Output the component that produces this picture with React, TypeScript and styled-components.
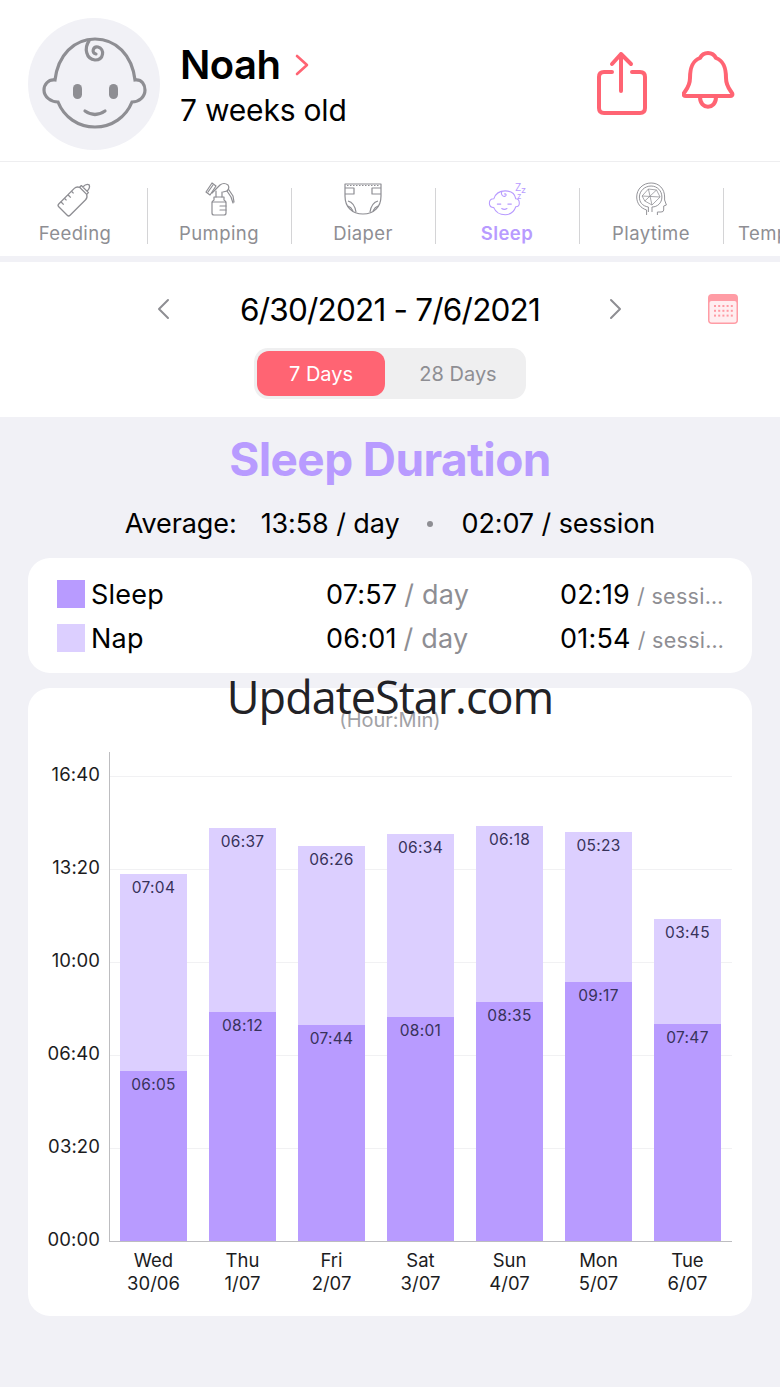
import React from "react";
import styled, { createGlobalStyle } from "styled-components";

const PINK = "#ff6473";
const SLEEP = "#b89bff";
const NAP = "#dccfff";
const MIN_PX = 0.465;

const GlobalStyle = createGlobalStyle`
  html, body {
    margin: 0;
    padding: 0;
    background: #f1f1f6;
  }
  body {
    font-family: Inter, "Liberation Sans", sans-serif;
    color: #000;
  }
`;

const Page = styled.div`
  width: 780px;
  height: 1387px;
  overflow: hidden;
  background: #f1f1f6;
`;

const Header = styled.header`
  height: 162px;
  box-sizing: border-box;
  padding: 18px 44px 0 28px;
  display: flex;
  align-items: flex-start;
  background: #fff;
  border-bottom: 1px solid #eeeef0;
`;

const Avatar = styled.div`
  width: 132px;
  height: 132px;
  border-radius: 50%;
  background: #f1f1f6;
  flex: none;
`;

const Who = styled.div`
  margin: 23px 0 0 20px;
  flex: 1;
`;

const Name = styled.div`
  display: flex;
  align-items: center;
  gap: 14px;
  font-size: 40px;
  line-height: 48px;
  font-weight: 600;
  letter-spacing: -0.5px;
`;

const Age = styled.div`
  font-size: 30px;
  line-height: 38px;
  margin-top: 2px;
  letter-spacing: -0.2px;
`;

const HeaderIcons = styled.div`
  display: flex;
  align-items: flex-start;
  gap: 34px;
  padding-top: 32px;
`;

const TabBar = styled.nav`
  height: 94px;
  padding-left: 4px;
  display: flex;
  overflow: hidden;
  background: #fff;
  border-bottom: 6px solid #f1f1f6;
`;

const Tab = styled.div`
  flex: none;
  width: 144px;
  position: relative;
  display: flex;
  flex-direction: column;
  align-items: center;
  padding: 20px 2px 0 0;
  box-sizing: border-box;
  color: ${(p: { $active?: boolean }) => (p.$active ? SLEEP : "#8e8e93")};
  &:not(:last-child)::after {
    content: "";
    position: absolute;
    right: 0;
    top: 26px;
    height: 56px;
    width: 1.5px;
    background: #d4d4d6;
  }
  &:last-child {
    padding-left: 2px;
  }
`;

const TabLabel = styled.span<{ $active?: boolean }>`
  font-size: 18.5px;
  line-height: 24px;
  margin-top: 5px;
  letter-spacing: 0.4px;
  font-weight: ${(p) => (p.$active ? 600 : 400)};
  white-space: nowrap;
`;

const RangePanel = styled.section`
  height: 155px;
  background: #fff;
  display: flex;
  flex-direction: column;
  align-items: center;
`;

const DateRow = styled.div`
  width: 100%;
  height: 86px;
  box-sizing: border-box;
  padding: 8px 42px 0 156px;
  display: flex;
  align-items: center;
`;

const DateText = styled.div`
  flex: none;
  width: 300px;
  margin: 0 69px 0 70px;
  font-size: 31.5px;
  letter-spacing: -0.8px;
  text-align: center;
  white-space: nowrap;
`;

const CalendarSlot = styled.div`
  margin-left: auto;
  height: 30px;
`;

const Segment = styled.div`
  width: 272px;
  height: 51px;
  box-sizing: border-box;
  padding: 3px;
  display: flex;
  background: #efeff0;
  border-radius: 14px;
`;

const SegmentItem = styled.div<{ $active?: boolean }>`
  height: 45px;
  width: ${(p) => (p.$active ? 128 : 138)}px;
  box-sizing: border-box;
  padding-left: ${(p) => (p.$active ? 0 : 8)}px;
  border-radius: 12px;
  display: flex;
  align-items: center;
  justify-content: center;
  font-size: 20px;
  background: ${(p) => (p.$active ? PINK : "transparent")};
  color: ${(p) => (p.$active ? "#fff" : "#8e8e93")};
`;

const Summary = styled.section`
  text-align: center;
`;

const Title = styled.h1`
  margin: 13px 0 0;
  font-size: 46px;
  line-height: 58px;
  font-weight: 700;
  color: ${SLEEP};
  letter-spacing: -0.6px;
`;

const AverageRow = styled.div`
  margin-top: 17px;
  height: 36px;
  display: flex;
  justify-content: center;
  align-items: center;
  font-size: 27px;
  letter-spacing: -0.1px;
  white-space: nowrap;
`;

const Dot = styled.i`
  width: 6px;
  height: 6px;
  border-radius: 50%;
  background: #8e8e93;
  margin: 2px 28px 0;
`;

const AverageLabel = styled.span`
  margin-right: 24px;
`;

const Card = styled.div`
  margin: 0 28px;
  background: #fff;
  border-radius: 22px;
`;

const LegendCard = styled(Card)`
  margin-top: 17px;
  height: 115px;
  box-sizing: border-box;
  padding: 14px 29px 0;
`;

const LegendRow = styled.div`
  height: 44px;
  display: grid;
  grid-template-columns: 269px 234px 1fr;
  align-items: center;
  font-size: 27px;
  letter-spacing: 0.2px;
  white-space: nowrap;
`;

const LegendName = styled.div`
  display: flex;
  align-items: center;
  gap: 6px;
`;

const Swatch = styled.i<{ $color: string }>`
  width: 28px;
  height: 28px;
  background: ${(p) => p.$color};
`;

const LegendValue = styled.div`
  display: flex;
  align-items: baseline;
`;

const Unit = styled.span`
  color: #8e8e93;
  margin-left: 7px;
`;

const SessionUnit = styled.span`
  display: block;
  width: 88px;
  margin-left: 7px;
  overflow: hidden;
  text-overflow: ellipsis;
  color: #8e8e93;
  font-size: 21.5px;
  letter-spacing: 0.3px;
`;

const ChartCard = styled(Card)`
  margin-top: 15px;
  height: 628px;
  position: relative;
`;

const Watermark = styled.div`
  position: absolute;
  top: -20px;
  left: 0;
  right: 0;
  text-align: center;
  font-family: "Open Sans", sans-serif;
  font-size: 45px;
  line-height: 58px;
  letter-spacing: -1px;
  color: #222226;
`;

const ChartUnit = styled.div`
  padding-top: 20px;
  text-align: center;
  font-size: 20px;
  line-height: 24px;
  color: #a2a2a6;
`;

const ChartBody = styled.div`
  margin-top: 20px;
  display: grid;
  grid-template-columns: 81px 623px;
`;

const YAxis = styled.div`
  height: 490px;
  padding-top: 22px;
  box-sizing: border-box;
  display: flex;
  flex-direction: column;
  align-items: flex-end;
`;

const YTick = styled.div`
  flex: none;
  height: 93px;
  padding-right: 9px;
  font-size: 18.5px;
  line-height: 0;
  letter-spacing: 0.1px;
  color: #1c1c1e;
`;

const Plot = styled.div`
  height: 490px;
  box-sizing: border-box;
  border-left: 1.5px solid #bdbdc0;
  border-bottom: 1.5px solid #bdbdc0;
  padding-left: 10px;
  display: flex;
  align-items: flex-end;
  gap: 22px;
  background-image: linear-gradient(#f1f1f3 1px, transparent 1px);
  background-size: 100% 93px;
  background-position: 0 24px;
`;

const Bar = styled.div`
  flex: none;
  width: 67px;
  display: flex;
  flex-direction: column;
`;

const Segm = styled.div<{ $color: string }>`
  background: ${(p) => p.$color};
  padding-top: 4px;
  box-sizing: border-box;
  text-align: center;
  font-size: 15.5px;
  line-height: 19px;
  letter-spacing: 0.3px;
  color: #37325a;
`;

const XAxis = styled.div`
  margin-left: 92px;
  padding-top: 7px;
  display: flex;
  gap: 22px;
`;

const XLabel = styled.div`
  flex: none;
  width: 67px;
  text-align: center;
  white-space: nowrap;
  font-size: 18.5px;
  line-height: 23px;
  color: #1c1c1e;
`;

const BabyIcon = () => (
  <svg width="132" height="132" viewBox="28 18 132 132" fill="none" stroke="#8e8e93" strokeWidth="3.2" strokeLinecap="round">
    <path d="M55 80C58 55 74 39 95 39C116 39 132 55 135 80C142 79 145 85 145 90C145 97 139 102 132 102C126 117 112 127 95 127C78 127 64 117 58 102C51 102 44 97 44 90C44 85 48 79 55 80Z" />
    <path d="M89 41C84 48 86 59 95 60C104 60 105 49 98 47C93 46 91 53 96 54" />
    <rect x="73" y="84" width="9" height="15" rx="4.5" fill="#8e8e93" stroke="none" />
    <rect x="109" y="84" width="9" height="15" rx="4.5" fill="#8e8e93" stroke="none" />
    <path d="M85 111Q95 118 105 111" />
  </svg>
);

const NameChevron = () => (
  <svg width="14" height="22" viewBox="0 0 14 22" fill="none" stroke={PINK} strokeWidth="2.6" strokeLinecap="round" strokeLinejoin="round">
    <path d="M2 2L12 11L2 20" />
  </svg>
);

const ShareIcon = () => (
  <svg width="52" height="66" viewBox="596 50 52 66" fill="none" stroke={PINK} strokeWidth="4" strokeLinecap="round" strokeLinejoin="round">
    <path d="M612 72H604Q599 72 599 77V108Q599 113 604 113H640Q645 113 645 108V77Q645 72 640 72H632" />
    <path d="M621 91V54M612 64L621 54L631 64" />
  </svg>
);

const BellIcon = () => (
  <svg width="54" height="60" viewBox="682 54 54 60" fill="none" stroke={PINK} strokeWidth="4" strokeLinecap="round" strokeLinejoin="round">
    <path d="M708 57C703 57 701 60 700 62C692 65 690 72 690 82C690 90 686 94 684 97C683 99 684 100 686 100H730C732 100 733 99 732 97C730 94 726 90 726 82C726 72 724 65 716 62C715 60 713 57 708 57Z" />
    <path d="M700 101C700 114 716 114 716 101" />
  </svg>
);

const BottleIcon = () => (
  <svg width="40" height="34" viewBox="0 0 40 34" fill="none" stroke="currentColor" strokeWidth="1.3" strokeLinejoin="round" overflow="visible">
    <g transform="rotate(45 20 17) translate(0 1)">
      <path d="M12 9Q12 6 15 4.500H25Q28 6 28 9V31Q28 33 26 33H14Q12 33 12 31Z" />
      <path d="M15 4.500V2H25V4.500M17 2Q17 -3 20 -4Q23 -3 23 2" />
      <path d="M12 13H15M12 18H16M12 23H15M12 28H16" />
    </g>
  </svg>
);

const PumpIcon = () => (
  <svg width="40" height="34" viewBox="0 0 40 34" fill="none" stroke="currentColor" strokeWidth="1.2" strokeLinecap="round" strokeLinejoin="round">
    <path d="M7 10L13 1L17 4L11 13Z" />
    <path d="M9 10L14 3" />
    <path d="M13 11L21 3Q25 0 29 3Q31 6 28 9L24 10" />
    <path d="M28 9L32 15L34 21M30 8L34 14L35 20" />
    <path d="M17 9V15M23 10V15" />
    <path d="M15 15H25V18Q27 19 27 21V31Q27 33 25 33H15Q13 33 13 31V21Q13 19 15 18Z" />
    <path d="M13 20H27M21 24H27M21 28H27" />
  </svg>
);

const DiaperIcon = () => (
  <svg width="40" height="34" viewBox="0 0 40 34" fill="none" stroke="currentColor" strokeWidth="1.2" strokeLinejoin="round">
    <path d="M2 2H38V14C38 25 31 32 20 32C9 32 2 25 2 14Z" />
    <path d="M4 3.500H36" strokeDasharray="1.500 1.500" />
    <path d="M2 6H11V12H2M38 6H29V12H38" />
    <path d="M5 19C9 20 12 24 13 30M35 19C31 20 28 24 27 30" />
    <path d="M5 24C8 25 9 27 10 29M35 24C32 25 31 27 30 29" />
  </svg>
);

const SleepIcon = () => (
  <svg width="40" height="34" viewBox="0 0 40 34" fill="none" stroke="currentColor" strokeWidth="1.2" strokeLinecap="round">
    <g transform="translate(1.500 4.500) scale(0.88)">
      <path d="M6 14C8 8 13 5 19 5C25 5 30 8 31 14C34 14 35 17 35 19C35 22 33 23 31 23C29 29 24 32 19 32C13 32 8 29 6 24C3 24 1 22 1 19C1 16 3 14 6 14Z" />
      <path d="M15 6C14 9 16 12 19 11C21 10 20 8 18 8.500" />
      <path d="M10 20H14M22 20H26M15 25Q18 27 21 25" />
    </g>
    <text x="28" y="9" fontSize="10" fontFamily="Inter, sans-serif" fill="currentColor" stroke="none">Z</text>
    <text x="34" y="11" fontSize="9" fontFamily="Inter, sans-serif" fill="currentColor" stroke="none">z</text>
    <text x="30" y="17" fontSize="8" fontFamily="Inter, sans-serif" fill="currentColor" stroke="none">z</text>
  </svg>
);

const BrainIcon = () => (
  <svg width="40" height="34" viewBox="0 0 40 34" fill="none" stroke="currentColor" strokeWidth="1" strokeLinejoin="round">
    <g transform="translate(3 0) scale(0.9 1)">
      <path d="M14 33V28C7 26 3 21 3 15C3 7 10 1 19 1C28 1 34 7 34 15V18L36 23L33 24V28Q33 30 30 30H26V33" />
      <path d="M16 30V25C9 24 6 20 6 15C6 9 12 4 19 4C26 4 31 9 31 15C31 21 26 25 20 25V30" />
      <path d="M9 14L16 7L25 8L29 15L20 23L12 19ZM16 7L20 23M25 8L12 19M9 14L29 15" strokeWidth="0.8" />
    </g>
  </svg>
);

const ChevronLeft = () => (
  <svg width="14" height="22" viewBox="0 0 14 22" fill="none" stroke="#8e8e93" strokeWidth="2" strokeLinecap="round" strokeLinejoin="round">
    <path d="M12 2L3 11L12 20" />
  </svg>
);

const ChevronRight = () => (
  <svg width="14" height="22" viewBox="0 0 14 22" fill="none" stroke="#8e8e93" strokeWidth="2" strokeLinecap="round" strokeLinejoin="round">
    <path d="M2 2L11 11L2 20" />
  </svg>
);

const CalendarIcon = () => (
  <svg width="30" height="30" viewBox="0 0 30 30">
    <rect width="30" height="30" rx="4" fill="#ff9ca5" />
    <rect x="1.500" y="7" width="27" height="21.500" rx="2" fill="#ffeef0" />
    {[0, 1, 2].map((r) =>
      [0, 1, 2, 3, 4].map((c) => (
        <rect key={`${r}-${c}`} x={6 + c * 4.2} y={11 + r * 4.800} width="2" height="2" fill="#ff9aa3" />
      ))
    )}
  </svg>
);

const tabs = [
  { label: "Feeding", icon: <BottleIcon /> },
  { label: "Pumping", icon: <PumpIcon /> },
  { label: "Diaper", icon: <DiaperIcon /> },
  { label: "Sleep", icon: <SleepIcon />, active: true },
  { label: "Playtime", icon: <BrainIcon /> },
  { label: "Temperature", icon: null },
];

const legend = [
  { name: "Sleep", color: SLEEP, day: "07:57", session: "02:19" },
  { name: "Nap", color: NAP, day: "06:01", session: "01:54" },
];

const yTicks = ["16:40", "13:20", "10:00", "06:40", "03:20", "00:00"];

const days = [
  { day: "Wed", date: "30/06", sleep: "06:05", nap: "07:04" },
  { day: "Thu", date: "1/07", sleep: "08:12", nap: "06:37" },
  { day: "Fri", date: "2/07", sleep: "07:44", nap: "06:26" },
  { day: "Sat", date: "3/07", sleep: "08:01", nap: "06:34" },
  { day: "Sun", date: "4/07", sleep: "08:35", nap: "06:18" },
  { day: "Mon", date: "5/07", sleep: "09:17", nap: "05:23" },
  { day: "Tue", date: "6/07", sleep: "07:47", nap: "03:45" },
];

const toPx = (t: string) => {
  const [h, m] = t.split(":").map(Number);
  return (h * 60 + m) * MIN_PX;
};

export default function App() {
  return (
    <Page>
      <GlobalStyle />
      <Header>
        <Avatar>
          <BabyIcon />
        </Avatar>
        <Who>
          <Name>
            Noah <NameChevron />
          </Name>
          <Age>7 weeks old</Age>
        </Who>
        <HeaderIcons>
          <ShareIcon />
          <BellIcon />
        </HeaderIcons>
      </Header>

      <TabBar>
        {tabs.map((t) => (
          <Tab key={t.label} $active={t.active}>
            {t.icon || <svg width="40" height="34" />}
            <TabLabel $active={t.active}>{t.label}</TabLabel>
          </Tab>
        ))}
      </TabBar>

      <RangePanel>
        <DateRow>
          <ChevronLeft />
          <DateText>6/30/2021 - 7/6/2021</DateText>
          <ChevronRight />
          <CalendarSlot>
            <CalendarIcon />
          </CalendarSlot>
        </DateRow>
        <Segment>
          <SegmentItem $active>7 Days</SegmentItem>
          <SegmentItem>28 Days</SegmentItem>
        </Segment>
      </RangePanel>

      <Summary>
        <Title>Sleep Duration</Title>
        <AverageRow>
          <AverageLabel>Average:</AverageLabel>
          13:58 / day
          <Dot />
          02:07 / session
        </AverageRow>
      </Summary>

      <LegendCard>
        {legend.map((l) => (
          <LegendRow key={l.name}>
            <LegendName>
              <Swatch $color={l.color} />
              {l.name}
            </LegendName>
            <LegendValue>
              {l.day}
              <Unit>/ day</Unit>
            </LegendValue>
            <LegendValue>
              {l.session}
              <SessionUnit>/ session</SessionUnit>
            </LegendValue>
          </LegendRow>
        ))}
      </LegendCard>

      <ChartCard>
        <Watermark>UpdateStar.com</Watermark>
        <ChartUnit>(Hour:Min)</ChartUnit>
        <ChartBody>
          <YAxis>
            {yTicks.map((t) => (
              <YTick key={t}>{t}</YTick>
            ))}
          </YAxis>
          <Plot>
            {days.map((d) => (
              <Bar key={d.day}>
                <Segm $color={NAP} style={{ height: toPx(d.nap) }}>
                  {d.nap}
                </Segm>
                <Segm $color={SLEEP} style={{ height: toPx(d.sleep) }}>
                  {d.sleep}
                </Segm>
              </Bar>
            ))}
          </Plot>
        </ChartBody>
        <XAxis>
          {days.map((d) => (
            <XLabel key={d.day}>
              {d.day}
              <br />
              {d.date}
            </XLabel>
          ))}
        </XAxis>
      </ChartCard>
    </Page>
  );
}
